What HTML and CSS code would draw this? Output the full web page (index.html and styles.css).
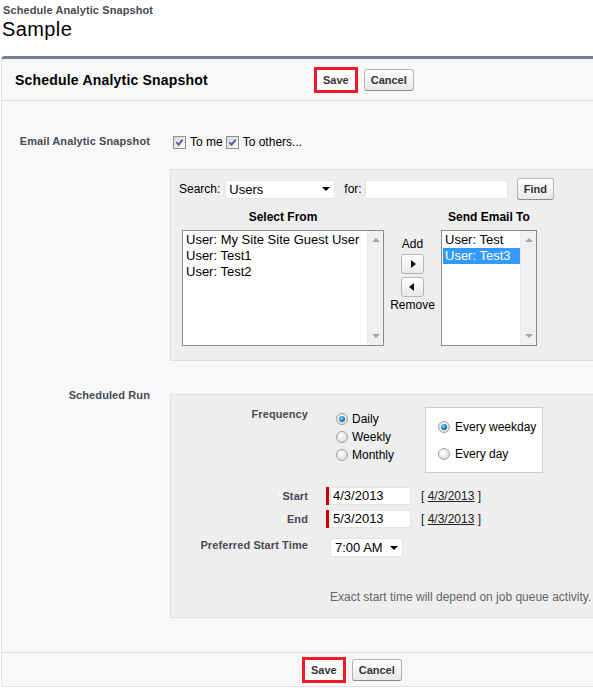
FILE: index.html
```html
<!DOCTYPE html>
<html>
<head>
    <meta charset="UTF-8" />
    <title>Schedule Analytic Snapshot</title>
    <link rel="stylesheet" href="styles.css">
</head>
<body>
    <div class="crumb">Schedule Analytic Snapshot</div>
    <h1 class="page-title">Sample</h1>

    <div class="panel">
        <div class="pb-head">
            <h2 class="pb-title">Schedule Analytic Snapshot</h2>
            <button class="btn marked">Save</button>
            <button class="btn">Cancel</button>
        </div>

        <div class="pb-body">
            <!-- email -->
            <div class="row row-email">
                <div class="lbl">Email Analytic Snapshot</div>
                <div class="checks">
                    <span class="cb first"><svg width="11" height="11" viewBox="0 0 11 11"><path d="M2.5 5.2 L4.6 7.8 L8.6 2.6" stroke="#4b5fa6" stroke-width="1.9" fill="none"/></svg></span>
                    <span>To me</span>
                    <span class="cb"><svg width="11" height="11" viewBox="0 0 11 11"><path d="M2.5 5.2 L4.6 7.8 L8.6 2.6" stroke="#4b5fa6" stroke-width="1.9" fill="none"/></svg></span>
                    <span>To others...</span>
                </div>
            </div>

            <div class="row row-picker">
                <div></div>
                <div class="box picker-box">
                    <div class="search">
                        <span>Search:</span>
                        <div class="sel users">Users<span class="caret"></span></div>
                        <span class="for">for:</span>
                        <div class="txt search-txt"></div>
                        <button class="btn find">Find</button>
                    </div>

                    <div class="picker">
                        <div class="col-head">Select From</div>
                        <div></div>
                        <div class="col-head">Send Email To</div>

                        <div class="list">
                            <div class="list-items">
                                <div>User: My Site Site Guest User</div>
                                <div>User: Test1</div>
                                <div>User: Test2</div>
                            </div>
                            <div class="sbar"><span class="up"></span><span class="down"></span></div>
                        </div>
                        <div class="mid">
                            <span>Add</span>
                            <span class="arrow-btn"><span class="tri-r"></span></span>
                            <span class="arrow-btn"><span class="tri-l"></span></span>
                            <span class="rm">Remove</span>
                        </div>
                        <div class="list">
                            <div class="list-items">
                                <div>User: Test</div>
                                <div class="picked">User: Test3</div>
                            </div>
                            <div class="sbar"><span class="up"></span><span class="down"></span></div>
                        </div>
                    </div>
                </div>
            </div>

            <!-- schedule -->
            <div class="row row-sched">
                <div class="lbl">Scheduled Run</div>
                <div class="sched-wrap">
                    <div class="box sched-box">
                        <div class="srow">
                            <div class="lbl">Frequency</div>
                            <div class="freq">
                                <div class="radios">
                                    <div class="opt"><span class="radio on"></span>Daily</div>
                                    <div class="opt"><span class="radio"></span>Weekly</div>
                                    <div class="opt"><span class="radio"></span>Monthly</div>
                                </div>
                                <div class="every">
                                    <div class="opt"><span class="radio on"></span>Every weekday</div>
                                    <div class="opt"><span class="radio"></span>Every day</div>
                                </div>
                            </div>
                        </div>

                        <div class="srow date-row">
                            <div class="lbl"><span class="ast">*</span>Start</div>
                            <div class="date">
                                <span class="req"></span>
                                <div class="txt date-txt">4/3/2013</div>
                                <span class="today">[ <a href="#">4/3/2013</a> ]</span>
                            </div>
                        </div>
                        <div class="srow date-row end-row">
                            <div class="lbl"><span class="ast">*</span>End</div>
                            <div class="date">
                                <span class="req"></span>
                                <div class="txt date-txt">5/3/2013</div>
                                <span class="today">[ <a href="#">4/3/2013</a> ]</span>
                            </div>
                        </div>

                        <div class="srow time-row">
                            <div class="lbl">Preferred Start Time</div>
                            <div><div class="sel time">7:00 AM<span class="caret"></span></div></div>
                        </div>

                        <div class="srow note-row">
                            <div></div>
                            <div class="note">Exact start time will depend on job queue activity.</div>
                        </div>
                    </div>
                </div>
            </div>
        </div>

        <div class="pb-foot">
            <button class="btn marked">Save</button>
            <button class="btn">Cancel</button>
        </div>
    </div>
</body>
</html>
```

FILE: styles.css
```css
* {
    margin: 0;
    padding: 0;
    box-sizing: border-box;
}
html, body {
    overflow: hidden;
}
body {
    font-family: "Liberation Sans", Arial, sans-serif;
    font-size: 12px;
    color: #000;
    background-color: #fff;
}

.crumb {
    padding: 3px 0 0 3px;
    font-size: 11px;
    line-height: 14px;
    font-weight: bold;
    color: #4a4a56;
    letter-spacing: 0.1px;
}
.page-title {
    padding-left: 2px;
    font-size: 20px;
    line-height: 24px;
    font-weight: normal;
    letter-spacing: 0.4px;
}

.panel {
    margin: 15px -12px 0 1px;          /* runs past the right edge of the window */
    border: 1px solid #e0e3e5;
    border-top: 3px solid #777f96;
    border-radius: 4px;
    background-color: #f8f8f8;
}

.pb-head {
    display: flex;
    align-items: center;
    height: 42px;
    border-bottom: 1px solid #dbdbdb;
}
.pb-title {
    width: 314px;
    padding-left: 13px;
    font-size: 14px;
    font-weight: bold;
    letter-spacing: 0.2px;
}

.btn {
    font: bold 11px "Liberation Sans", Arial, sans-serif;
    line-height: 12px;
    color: #333;
    padding: 4px 6px;
    margin-right: 8px;
    border: 1px solid #b5b5b5;
    border-bottom-color: #8a8a8a;
    border-radius: 3px;
    background: linear-gradient(#fff, #e9e9e9);
}
.btn.marked {
    border-color: #ed1c24;
    border-radius: 0;
    outline: 2px solid #ed1c24;
    background: #fff;
}

.pb-body {
    padding-bottom: 34px;
}
.row {
    display: grid;
    grid-template-columns: 148px 1fr;
    column-gap: 20px;
}
.lbl {
    text-align: right;
    font-size: 11px;
    line-height: 14px;
    font-weight: bold;
    color: #4a4a56;
    letter-spacing: 0.1px;
}

/* email row */
.row-email {
    padding-top: 33px;
}
.checks {
    display: flex;
    align-items: center;
    height: 16px;
}
.cb {
    display: flex;
    align-items: center;
    justify-content: center;
    width: 13px;
    height: 13px;
    margin: 0 4px 0 3px;
    border: 1px solid #8f8f8f;
    background: linear-gradient(135deg, #d8d8d8, #fdfdfd);
}
.cb.first {
    margin-left: 3px;
}

.box {
    background-color: #eee;
    border: 1px solid #dfdfdf;
    border-right: none;
}

/* picker */
.row-picker {
    margin-top: 19px;
}
.picker-box {
    height: 192px;
    padding: 8px 0 0 8px;
}
.search {
    display: flex;
    align-items: center;
    height: 22px;
}
.sel {
    display: flex;
    align-items: center;
    height: 19px;
    padding-left: 3px;
    font-size: 13px;
    background-color: #fff;
    border: 1px solid #e4e4e4;
}
.caret {
    margin-left: auto;
    margin-right: 4px;
    border-left: 4px solid transparent;
    border-right: 4px solid transparent;
    border-top: 4px solid #000;
}
.users {
    width: 110px;
    margin-left: 5px;
}
.for {
    margin-left: 9px;
}
.txt {
    background-color: #fff;
    border: 1px solid #e4e4e4;
    font-size: 13px;
}
.search-txt {
    width: 143px;
    height: 19px;
    margin-left: 3px;
}
.btn.find {
    margin-left: 9px;
}

.picker {
    display: grid;
    grid-template-columns: 202px 57px 96px;
    margin: 10px 0 0 3px;
}
.col-head {
    text-align: center;
    font-weight: bold;
    line-height: 14px;
    margin-bottom: 6px;
}
.list {
    display: flex;
    height: 116px;
    border: 1px solid #868a94;
    background-color: #fff;
}
.list-items {
    flex: 1;
    padding-top: 1px;
    font-size: 13px;
    line-height: 16px;
    white-space: nowrap;
}
.list-items div {
    padding-left: 3px;
}
.list-items .picked {
    margin-left: 1px;
    padding-left: 2px;
    background-color: #3399ff;
    color: #fff;
}
.sbar {
    display: flex;
    flex-direction: column;
    justify-content: space-between;
    align-items: center;
    width: 16px;
    padding: 7px 0;
    background-color: #f0f0f0;
    border-left: 1px solid #e8e8e8;
}
.up {
    border-left: 4px solid transparent;
    border-right: 4px solid transparent;
    border-bottom: 4px solid #a8a8a8;
}
.down {
    border-left: 4px solid transparent;
    border-right: 4px solid transparent;
    border-top: 4px solid #a8a8a8;
}

.mid {
    display: flex;
    flex-direction: column;
    align-items: center;
    padding-top: 7px;
    line-height: 14px;
}
.arrow-btn {
    display: flex;
    align-items: center;
    justify-content: center;
    width: 23px;
    height: 20px;
    margin-top: 3px;
    border: 1px solid #b5b5b5;
    border-radius: 3px;
    background: linear-gradient(#fff, #e9e9e9);
}
.tri-r {
    margin-left: 2px;
    border-top: 4px solid transparent;
    border-bottom: 4px solid transparent;
    border-left: 5px solid #111;
}
.tri-l {
    margin-right: 2px;
    border-top: 4px solid transparent;
    border-bottom: 4px solid transparent;
    border-right: 5px solid #111;
}
.rm {
    margin-top: 1px;
}

/* schedule */
.row-sched {
    margin-top: 27px;
}
.sched-wrap {
    padding-top: 6px;
}
.sched-box {
    height: 224px;
    padding-top: 12px;
}
.srow {
    display: grid;
    grid-template-columns: 137px 1fr;
    column-gap: 18px;
}

.freq {
    display: flex;
}
.radios {
    width: 89px;
    margin-left: 10px;
    padding-top: 3px;
}
.opt {
    display: flex;
    align-items: center;
    height: 18px;
}
.radio {
    flex: none;
    display: flex;
    align-items: center;
    justify-content: center;
    width: 12px;
    height: 12px;
    margin-right: 4px;
    border-radius: 50%;
    border: 1px solid #a0a0a0;
    background: radial-gradient(circle at 40% 35%, #fff 0, #e4e4e4 60%, #cdcdcd 100%);
}
.radio.on::after {
    content: "";
    width: 6px;
    height: 6px;
    border-radius: 50%;
    background: radial-gradient(circle at 40% 35%, #8ad6ff, #1a70b2 60%, #0c3d69);
}
.every {
    width: 118px;
    height: 66px;
    padding: 10px 0 0 12px;
    background-color: #fff;
    border: 1px solid #ccc;
}
.every .opt + .opt {
    margin-top: 9px;
}
.every .radio {
    margin-right: 5px;
}

.date-row {
    margin-top: 14px;
}
.date-row .lbl {
    padding-top: 2px;
}
.end-row {
    margin-top: 5px;
}
.ast {
    color: #fbfbfb;
}
.date {
    display: flex;
    align-items: center;
}
.req {
    width: 3px;
    height: 18px;
    margin-right: 1px;
    background-color: #c00;
}
.date-txt {
    width: 81px;
    height: 18px;
    padding-left: 2px;
    line-height: 16px;
}
.today {
    margin-left: 10px;
    color: #222;
}
.today a {
    color: #222;
}

.time-row {
    margin-top: 10px;
}
.time {
    width: 73px;
    margin-left: 4px;
    padding-left: 4px;
}
.note-row {
    margin-top: 33px;
}
.note {
    padding-left: 4px;
    line-height: 14px;
    color: #666;
    white-space: nowrap;
}

.pb-foot {
    display: flex;
    align-items: center;
    height: 34px;
    padding-left: 302px;
    border-top: 1px solid #dbdbdb;
}
```
